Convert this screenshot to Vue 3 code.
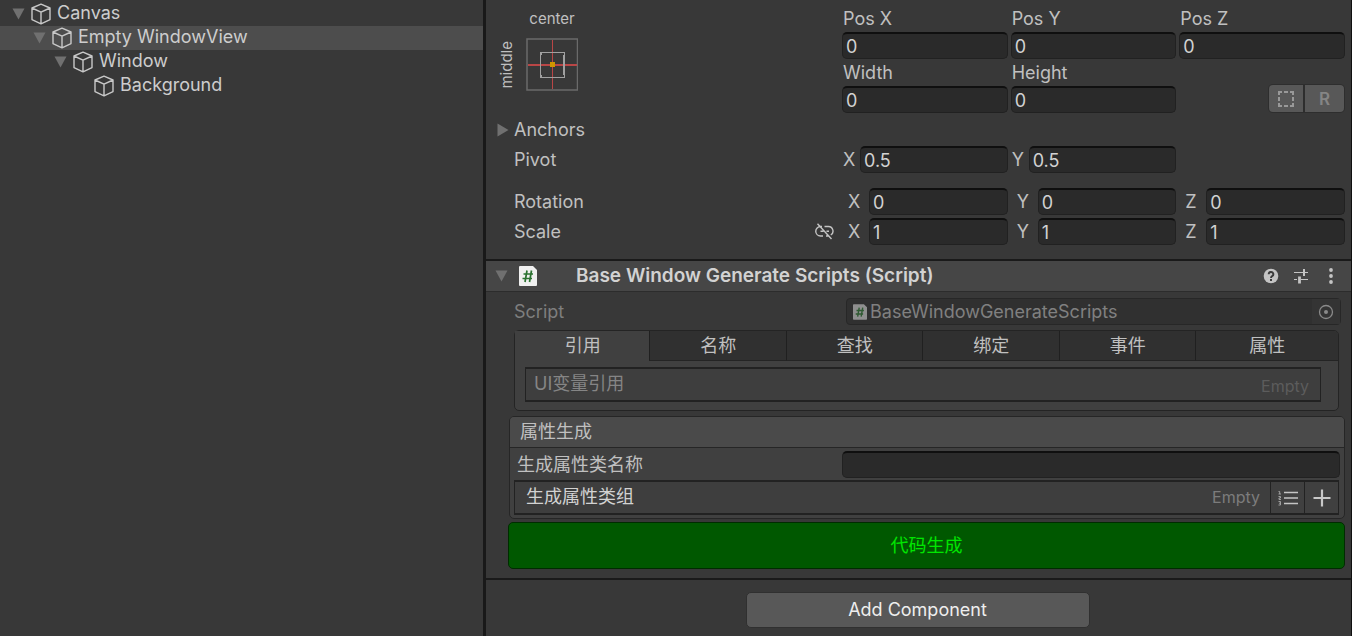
<script setup>
import { ref } from 'vue'

const nodes = [
  { name: 'Canvas', depth: 0, open: true },
  { name: 'Empty WindowView', depth: 1, open: true, selected: true },
  { name: 'Window', depth: 2, open: true },
  { name: 'Background', depth: 3, open: false }
]

const rect = ref([
  { label: 'Pos X', value: '0' },
  { label: 'Pos Y', value: '0' },
  { label: 'Pos Z', value: '0' },
  { label: 'Width', value: '0' },
  { label: 'Height', value: '0' }
])
const pivot = ref([
  { axis: 'X', value: '0.5' },
  { axis: 'Y', value: '0.5' }
])
const rotation = ref([
  { axis: 'X', value: '0' },
  { axis: 'Y', value: '0' },
  { axis: 'Z', value: '0' }
])
const scale = ref([
  { axis: 'X', value: '1' },
  { axis: 'Y', value: '1' },
  { axis: 'Z', value: '1' }
])

const tabs = ['引用', '名称', '查找', '绑定', '事件', '属性']
const active = ref(0)
const className = ref('')
</script>

<template>
  <div class="editor">
    <nav class="hierarchy" aria-label="Hierarchy">
      <ul>
        <li v-for="n in nodes" :key="n.name" :class="['node', 'depth-' + n.depth, { selected: n.selected }]">
          <svg class="arrow" :class="{ hidden: !n.open }" width="13" height="12" viewBox="0 0 13 12"><path d="M0.5 0.5h12L6.5 11.5z" /></svg>
          <svg class="cube" width="20" height="22" viewBox="0 0 20 22"><path d="M10 1.2 19 5v11.6L10 20.8 1 16.6V5zM1 5l9 4.2L19 5M10 9.2v11.6" /></svg>
          <span>{{ n.name }}</span>
        </li>
      </ul>
    </nav>

    <main class="inspector">
      <section class="transform">
        <div class="row top">
          <div class="anchor">
            <span class="anchor-x">center</span>
            <span class="anchor-y">middle</span>
            <button class="anchor-box" aria-label="Anchor presets">
              <svg width="52" height="53" viewBox="0 0 52 53">
                <rect x="1" y="1" width="50.5" height="51" fill="none" stroke="#6a6a6a" stroke-width="1.5" />
                <path d="M2 27h49" stroke="#b94646" stroke-width="2" />
                <path d="M26.500 2v49" stroke="#b94646" stroke-width="1" />
                <rect x="14.500" y="14.500" width="24" height="25" fill="none" stroke="#a0a0a0" />
                <path d="M15.500 15v2M15.500 37v2M37.500 17v20" stroke="#a0a0a0" />
                <rect x="24" y="24" width="5" height="5" fill="#cf9600" />
              </svg>
            </button>
          </div>
          <div class="cells">
            <label v-for="f in rect" :key="f.label" class="stacked">
              <span>{{ f.label }}</span>
              <input v-model="f.value" type="text" />
            </label>
            <div class="modes">
              <button aria-label="Blueprint mode">
                <svg width="18" height="18" viewBox="0 0 18 18"><path d="M2 5V2h3M7 2h4M13 2h3v3M16 7v4M16 13v3h-3M11 16H7M5 16H2v-3M2 11V7" /></svg>
              </button>
              <button class="raw">R</button>
            </div>
          </div>
        </div>

        <div class="row">
          <span class="name fold"><svg class="arrow" width="12" height="14" viewBox="0 0 12 14"><path d="M0.500 0.500v13L11.500 7z" /></svg>Anchors</span>
        </div>
        <div class="row">
          <span class="name">Pivot</span>
          <div class="cells">
            <label v-for="f in pivot" :key="f.axis" class="inline tight"><span>{{ f.axis }}</span><input v-model="f.value" type="text" /></label>
          </div>
        </div>
        <div class="row spaced">
          <span class="name">Rotation</span>
          <div class="cells">
            <label v-for="f in rotation" :key="f.axis" class="inline"><span>{{ f.axis }}</span><input v-model="f.value" type="text" /></label>
          </div>
        </div>
        <div class="row">
          <span class="name">Scale
            <button class="plain link" aria-label="Constrained proportions">
              <svg width="19" height="17" viewBox="0 0 19 17"><path d="M7 3.500H5.500a4.500 4.500 0 0 0 0 9.500H8M9.500 3.500h4a4.600 4.600 0 0 1 2.300 8.500M11 13h2M5.500 8.300h3M11.500 8.300h2.500M2.500 0.700l14 15.300" /></svg>
            </button>
          </span>
          <div class="cells">
            <label v-for="f in scale" :key="f.axis" class="inline"><span>{{ f.axis }}</span><input v-model="f.value" type="text" /></label>
          </div>
        </div>
      </section>

      <section class="script">
        <header class="component">
          <svg class="arrow" width="13" height="12" viewBox="0 0 13 12"><path d="M0.500 0.500h12L6.500 11.500z" /></svg>
          <svg class="file" width="18" height="20" viewBox="0 0 18 20">
            <path fill="#f0f0f0" d="M1 0h13l4 4v15q0 1-1 1H1q-1 0-1-1V1q0-1 1-1z" />
            <path fill="none" stroke="#2b7230" stroke-width="1.700" d="M8 4.500 6 16M12.500 4.500l-2 11.500M4.500 8H14M3.500 12.500H13" />
          </svg>
          <h2>Base Window Generate Scripts (Script)</h2>
          <button class="plain" aria-label="Help">
            <svg width="16" height="16" viewBox="0 0 16 16"><circle cx="8" cy="8" r="7.300" fill="#c4c4c4" /><path d="M5.700 6.200a2.300 2.200 0 1 1 3.400 1.900Q8 8.700 8 10" fill="none" stroke="#3c3c3c" stroke-width="1.900" /><rect x="7" y="11" width="2" height="2" fill="#3c3c3c" /></svg>
          </button>
          <button class="plain" aria-label="Presets">
            <svg width="16" height="16" viewBox="0 0 16 16"><path d="M1 4.500h9M12 4.500h3M1 11.500h3M8 11.500h7" stroke="#c4c4c4" stroke-width="1.200" /><path d="M11 1v7" stroke="#c4c4c4" stroke-width="2" /><path d="M6.500 8.500v7" stroke="#c4c4c4" stroke-width="2.800" /></svg>
          </button>
          <button class="plain" aria-label="More">
            <svg width="16" height="16" viewBox="0 0 16 16" fill="#c4c4c4"><circle cx="8" cy="2" r="1.900" /><circle cx="8" cy="8" r="1.900" /><circle cx="8" cy="14" r="1.900" /></svg>
          </button>
        </header>

        <div class="row object-row">
          <span class="name dim">Script</span>
          <div class="object">
            <svg width="14" height="16" viewBox="0 0 18 20">
              <path fill="#8f8f8f" d="M1 0h13l4 4v15q0 1-1 1H1q-1 0-1-1V1q0-1 1-1z" />
              <path fill="none" stroke="#2f5a32" stroke-width="1.800" d="M8 4.500 6 16M12.500 4.500l-2 11.500M4.500 8H14M3.500 12.500H13" />
            </svg>
            <span>BaseWindowGenerateScripts</span>
            <button class="plain" aria-label="Select object">
              <svg width="16" height="16" viewBox="0 0 16 16"><circle cx="8" cy="8" r="6.500" fill="none" stroke="#8a8a8a" stroke-width="1.300" /><circle cx="8" cy="8" r="2" fill="#8a8a8a" /></svg>
            </button>
          </div>
        </div>

        <div class="tabbox">
          <div class="tabs" role="tablist">
            <button v-for="(t, i) in tabs" :key="t" role="tab" :aria-selected="active === i" :class="{ active: active === i }" @click="active = i">{{ t }}</button>
          </div>
          <div class="list muted"><span class="title">UI变量引用</span><span class="empty">Empty</span></div>
        </div>

        <div class="group">
          <h3>属性生成</h3>
          <label class="class-name"><span>生成属性类名称</span><input v-model="className" type="text" /></label>
          <div class="list">
            <span class="title">生成属性类组</span><span class="empty">Empty</span>
            <button aria-label="Show index">
              <svg width="20" height="16" viewBox="0 0 20 16"><path d="M6 2.500h14M6 8h14M6 13.500h14" stroke="#c4c4c4" stroke-width="1.500" /><path d="M0.500 1.500h1.200V4M0.500 4h2.500M0.500 6.500h2v1.500h-1.500v1.500h2M0.500 11.500h2v3.500h-2M1 13.200h1.500" fill="none" stroke="#a8a8a8" stroke-width="0.900" /></svg>
            </button>
            <button aria-label="Add item">
              <svg width="18" height="18" viewBox="0 0 18 18"><path d="M9 0.500v17M0.500 9h17" stroke="#c8c8c8" stroke-width="2.200" /></svg>
            </button>
          </div>
        </div>

        <button class="generate">代码生成</button>
      </section>

      <footer><button class="add">Add Component</button></footer>
    </main>
  </div>
</template>

<style>
body {
  background: #383838;
}
</style>

<style scoped>
.editor {
  display: grid;
  grid-template-columns: 483fr 3px 866fr;
  min-height: 100vh;
  background: #191919;
  color: #c0c0c0;
  font: 18px/24px Inter, "Noto Sans CJK SC", sans-serif;
}
.editor * {
  box-sizing: border-box;
}
button,
input {
  margin: 0;
  padding: 0;
  border: 0;
  font: inherit;
  color: inherit;
}
svg {
  display: block;
  flex: none;
}
.arrow {
  fill: #707070;
}
.hidden {
  visibility: hidden;
}
.hierarchy {
  background: #383838;
}
.hierarchy ul {
  list-style: none;
  margin: 0;
  padding: 2px 0 0;
}
.node {
  display: flex;
  align-items: center;
  height: 24px;
  padding-left: 12px;
  color: #cdcdcd;
}
.node span {
  line-height: 22px;
  padding-bottom: 2px;
}
.depth-1 {
  padding-left: 33px;
}
.depth-2 {
  padding-left: 54px;
}
.depth-3 {
  padding-left: 75px;
}
.selected {
  background: #4d4d4d;
}
.cube {
  margin: 0 6px;
  fill: none;
  stroke: #c8c8c8;
  stroke-width: 1.4;
  stroke-linejoin: round;
}
.inspector {
  grid-column: 3;
  min-width: 0;
  background: #383838;
  border-right: 1px solid #101010;
}
.transform {
  display: grid;
  gap: 3px;
  padding: 5px 6px 14px 28px;
}
.row {
  display: grid;
  grid-template-columns: 328fr 503fr;
  align-items: center;
  min-height: 27px;
}
.top {
  align-items: start;
}
.spaced {
  margin-top: 12px;
}
.name {
  position: relative;
}
.fold .arrow {
  position: absolute;
  left: -17px;
  top: 5px;
}
.link {
  position: absolute;
  right: 8px;
  top: 3px;
}
.link svg {
  fill: none;
  stroke: #c4c4c4;
  stroke-width: 1.4;
}
.plain {
  background: none;
}
.dim {
  color: #7e7e7e;
}
.cells {
  display: grid;
  grid-template-columns: repeat(3, 1fr);
  column-gap: 3px;
}
input {
  min-width: 0;
  width: 100%;
  height: 27px;
  padding: 0 3px;
  color: #d2d2d2;
  background: #2a2a2a;
  border: 1px solid #212121;
  border-top: 2px solid #0f0f0f;
  border-radius: 5px;
  outline: 0;
}
.stacked > span {
  display: block;
  height: 27px;
  line-height: 27px;
  padding-left: 1px;
}
.stacked input {
  display: block;
}
.inline {
  display: flex;
  align-items: center;
  padding-left: 6px;
}
.inline span {
  flex: none;
  width: 21px;
}
.tight {
  padding-left: 1px;
}
.tight span {
  width: 17px;
}
.modes {
  display: flex;
  justify-self: end;
  align-self: end;
  gap: 2px;
  height: 29px;
  padding: 1px;
  background: #2e2e2e;
  border-radius: 5px;
}
.modes button {
  display: grid;
  place-items: center;
  width: 34px;
  background: #585858;
  color: #858585;
  border-radius: 4px 0 0 4px;
}
.modes .raw {
  width: 39px;
  font-size: 17px;
  font-weight: 600;
  border-radius: 0 4px 4px 0;
}
.modes svg {
  fill: none;
  stroke: #999;
  stroke-width: 2;
}
.anchor {
  display: grid;
  grid-template-columns: 12px 52px;
  grid-template-rows: 27px 53px;
  row-gap: 6px;
  font-size: 15px;
}
.anchor-x {
  grid-column: 2;
  justify-self: center;
  line-height: 27px;
}
.anchor-y {
  justify-self: end;
  align-self: center;
  margin-right: 7px;
  writing-mode: vertical-rl;
  transform: rotate(180deg);
  line-height: 24px;
}
.anchor-box {
  background: none;
}
.component {
  display: flex;
  align-items: center;
  height: 33px;
  padding: 0 12px 0 9px;
  background: #464646;
  border-top: 2px solid #1a1a1a;
  border-bottom: 1px solid #2c2c2c;
}
.file {
  margin-left: 11px;
}
h2 {
  flex: 1;
  margin: 0 0 0 39px;
  font-size: 19px;
  font-weight: 600;
  color: #d2d2d2;
}
.component .plain + .plain {
  margin-left: 14px;
}
.object-row {
  margin: 6px 10px 5px 28px;
  grid-template-columns: 332fr 495fr;
}
.object {
  display: flex;
  align-items: center;
  height: 27px;
  padding-left: 6px;
  color: #808080;
  background: #303030;
  border: 1px solid #272727;
  border-radius: 4px;
}
.object span {
  flex: 1;
  margin-left: 3px;
}
.object button {
  display: grid;
  place-items: center;
  width: 28px;
  height: 25px;
  background: #343434;
}
.tabbox {
  margin: 0 12px 5px 28px;
  padding-bottom: 8px;
  background: #404040;
  border: 1px solid #242424;
  border-radius: 5px;
}
.tabs {
  display: grid;
  grid-template-columns: 134fr repeat(4, 136fr) 142fr;
  margin-bottom: 6px;
}
.tabs button {
  height: 30px;
  background: #303030;
  border-bottom: 1px solid #242424;
  border-left: 1px solid #202020;
}
.tabs .active {
  background: #404040;
  border-color: transparent;
}
.tabs button:last-child {
  border-radius: 0 4px 0 0;
}
.list {
  display: flex;
  align-items: stretch;
  height: 35px;
  line-height: 30px;
  background: #3e3e3e;
  border: 1px solid #222;
  border-width: 2px 1px;
}
.title {
  flex: 1;
  padding-left: 11px;
  color: #d2d2d2;
}
.empty {
  padding-right: 10px;
  font-size: 16px;
  color: #7c7c7c;
}
.muted {
  margin: 0 17px 0 10px;
}
.muted .title {
  padding-left: 8px;
  color: #858585;
}
.muted .empty {
  color: #5c5c5c;
  padding: 2px 11px 0 0;
}
.list button {
  display: grid;
  place-items: center;
  width: 34px;
  background: #404040;
  border-left: 1px solid #222;
}
.group {
  margin: 0 6px 3px 23px;
  padding-bottom: 3px;
  background: #404040;
  border: 1px solid #262626;
  border-radius: 5px;
}
h3 {
  margin: 0 0 3px;
  padding: 0 10px;
  font-size: 18px;
  font-weight: 400;
  line-height: 30px;
  background: #4a4a4a;
  border-bottom: 1px solid #262626;
  border-radius: 4px 4px 0 0;
}
.class-name {
  display: grid;
  grid-template-columns: 325fr 498fr;
  align-items: center;
  margin: 0 4px 2px 7px;
}
.group .list {
  margin: 0 5px 0 4px;
}
.generate {
  display: block;
  width: calc(100% - 28px);
  height: 47px;
  margin: 0 6px 9px 22px;
  color: #00e600;
  background: #005800;
  border: 1px solid #002c00;
  border-radius: 5px;
}
footer {
  display: flex;
  justify-content: center;
  padding: 12px 2px 8px 0;
  border-top: 2px solid #1a1a1a;
}
.add {
  width: 344px;
  height: 36px;
  color: #eee;
  background: #585858;
  border: 1px solid #303030;
  border-radius: 5px;
}
</style>
